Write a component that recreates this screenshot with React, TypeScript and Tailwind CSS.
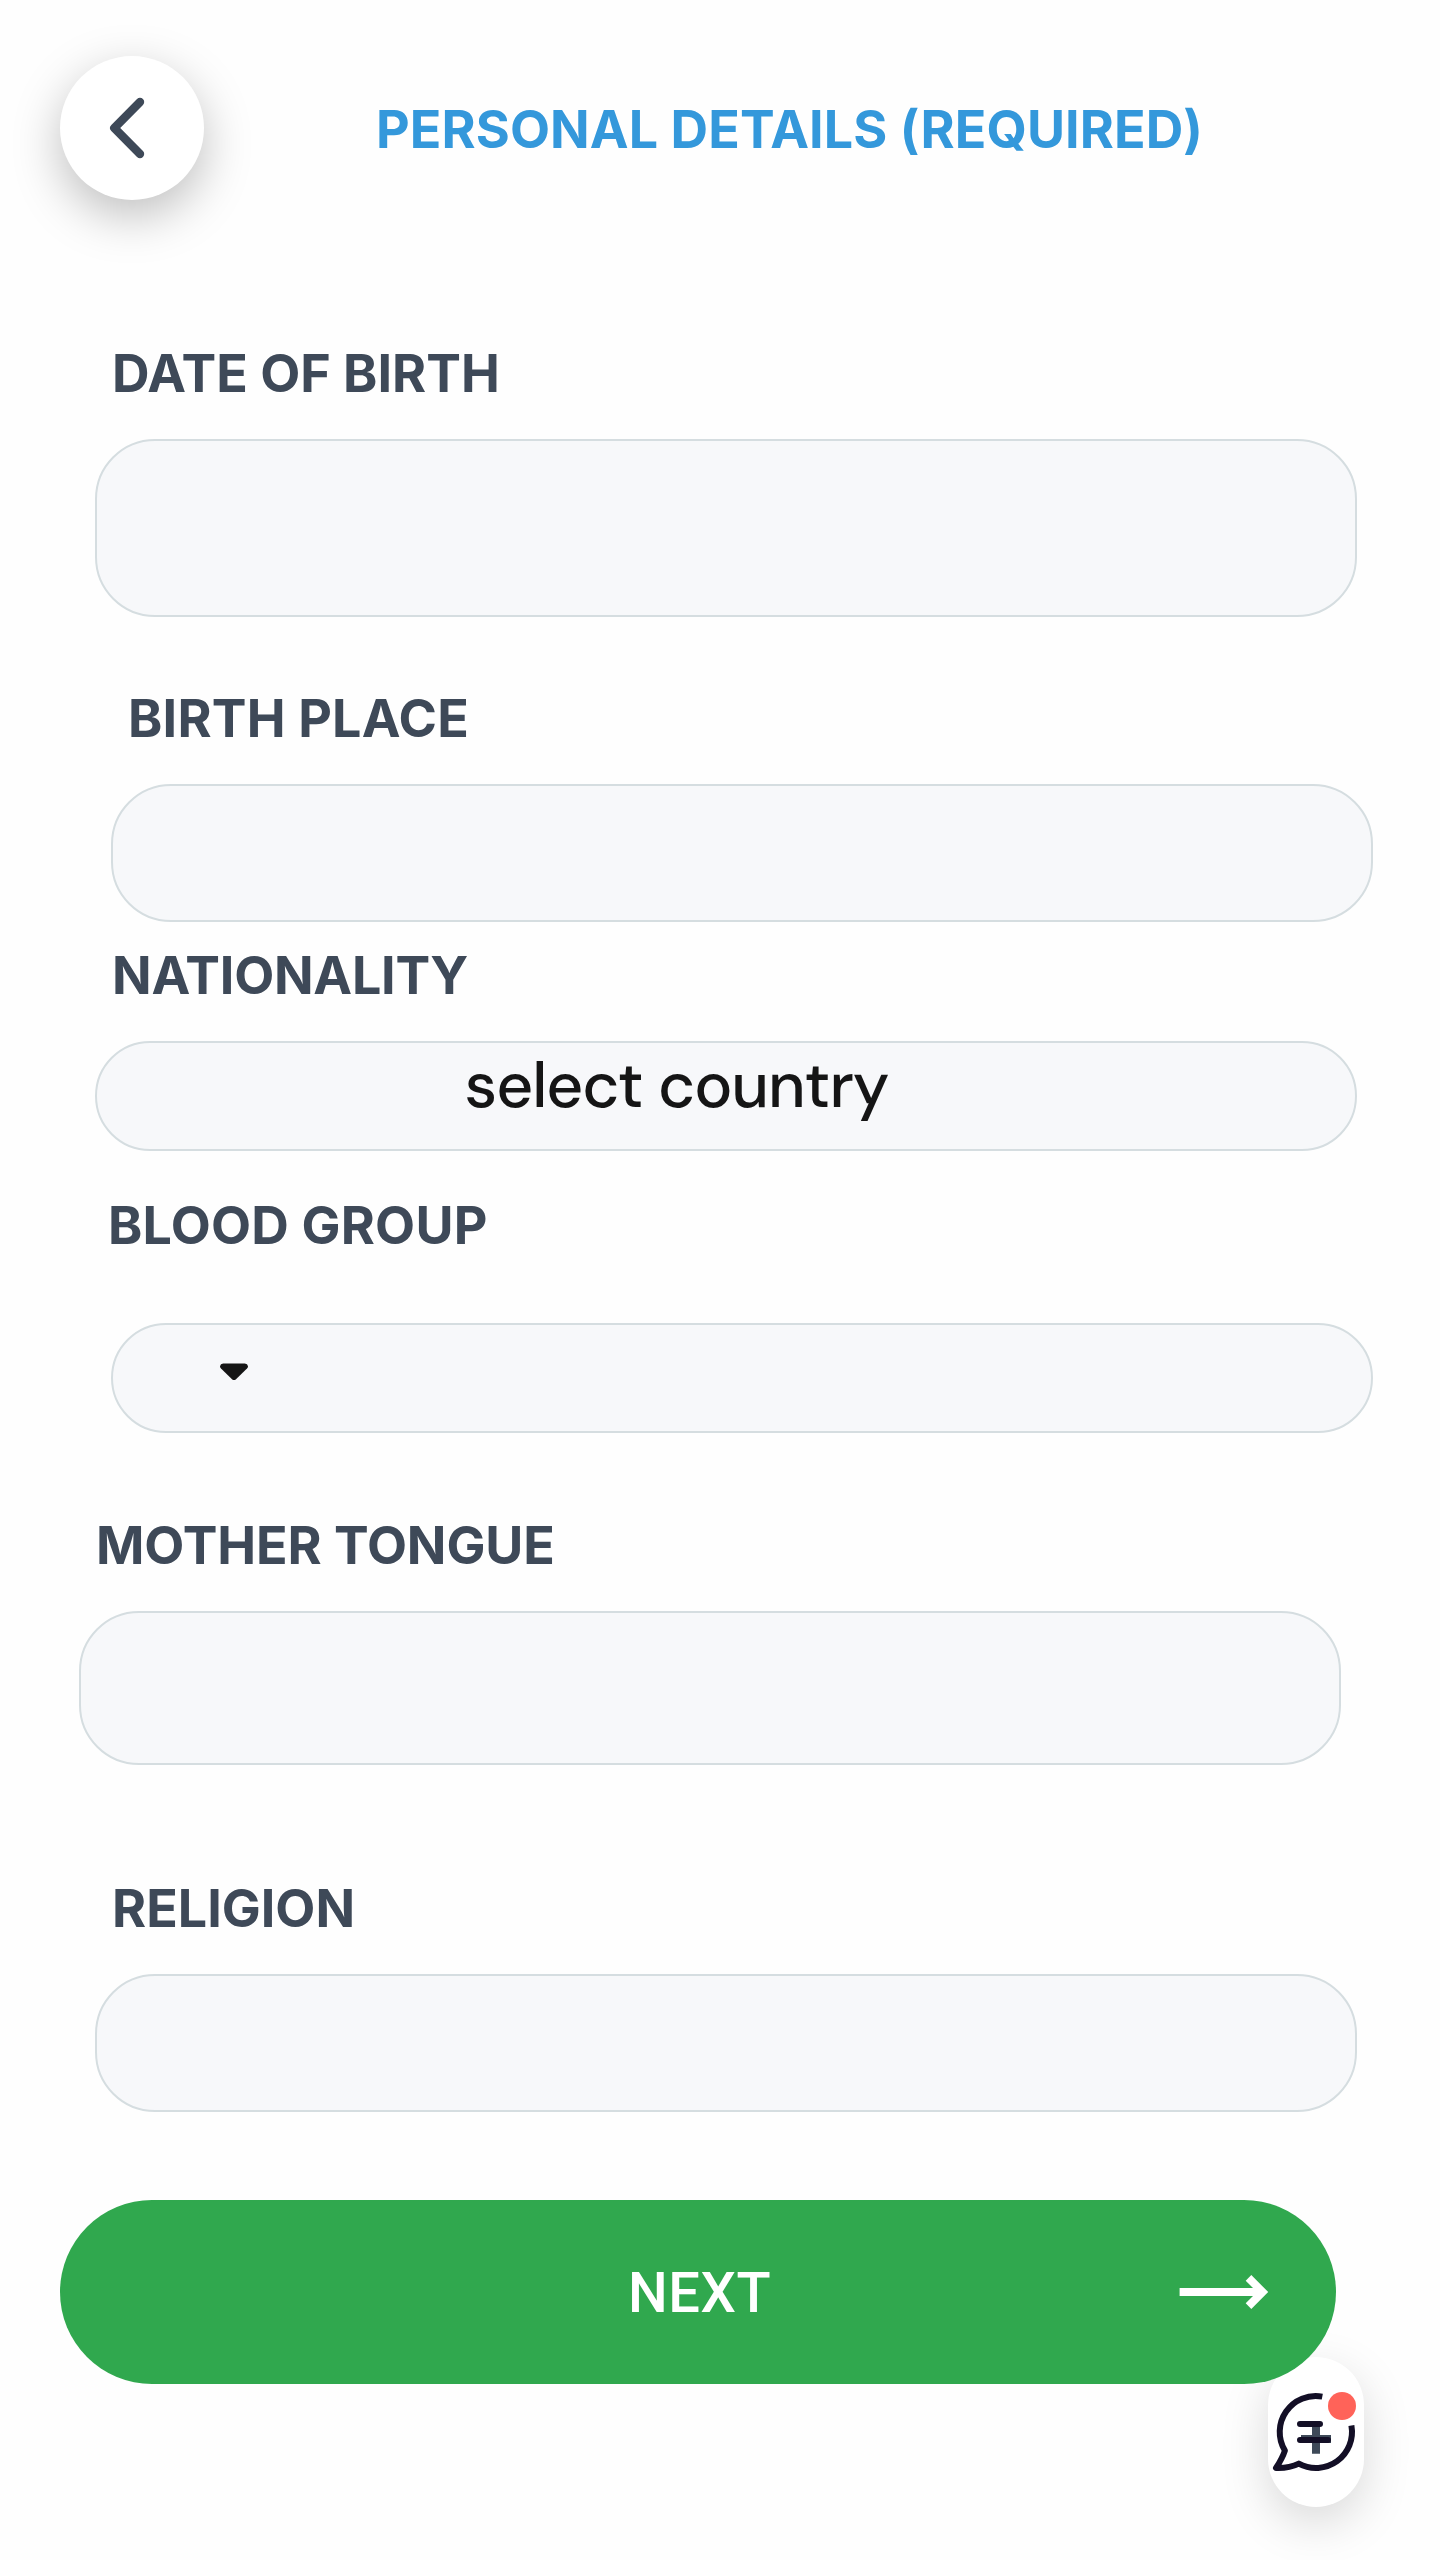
import type { ReactNode } from "react";

type FieldProps = {
  label: string;
  className: string;
  labelClass?: string;
  boxClass: string;
  children?: ReactNode;
};

function Field({ label, className, labelClass = "ml-[17px] mb-[39px]", boxClass, children }: FieldProps) {
  return (
    <div className={`flex w-[1262px] flex-col ${className}`}>
      <label className={`text-[52px] leading-[52px] font-bold whitespace-nowrap text-[#3e4958] ${labelClass}`}>
        {label}
      </label>
      <div className={`w-full rounded-[60px] border-2 border-[#d5dde0] bg-[#f7f8fa] ${boxClass}`}>{children}</div>
    </div>
  );
}

function BackIcon() {
  return (
    <svg
      className="mr-3 h-16 w-10"
      viewBox="0 0 40 64"
      fill="none"
      stroke="#3e4958"
      strokeWidth="8.4"
      strokeLinecap="round"
      strokeLinejoin="round"
    >
      <path d="M34 6 L8.3 32 L34 58" />
    </svg>
  );
}

function ArrowIcon() {
  return (
    <svg className="h-9 w-[90px]" viewBox="0 0 90 36" fill="#fff">
      <path d="M0.600 14H74L66.700 6.700L72.300 1.100L89.200 18L72.300 34.900L66.700 29.300L74 22H0.600Z" />
    </svg>
  );
}

function ChatIcon() {
  return (
    <svg className="h-24 w-24" viewBox="68 84 96 96" fill="none">
      <path d="M101 135h11v-11h8v11h11v8h-11v10.700h-8V143h-11z" fill="#3e4958" />
      <g stroke="#130f26" strokeWidth="6" strokeLinejoin="round">
        <path d="M122.300 96.600A36 36 0 0 0 84.900 150.600Q82.500 158 76 168Q89 168.500 98.800 163.600A36 36 0 0 0 151.400 125.500" />
        <path d="M100 124h20M100 140h28" strokeLinecap="round" />
      </g>
      <circle cx="142" cy="106" r="14" fill="#ff6359" />
    </svg>
  );
}

export default function App() {
  return (
    <main className="relative flex h-[2560px] w-[1440px] flex-col items-start overflow-hidden bg-[#fefefe] font-['Inter',sans-serif]">
      <header className="mt-14 ml-[60px] flex h-36 items-center">
        <button
          aria-label="Back"
          className="flex size-36 items-center justify-center rounded-full bg-white shadow-[0_16px_48px_rgba(0,0,0,0.25)]"
        >
          <BackIcon />
        </button>
        <h1 className="mt-1 ml-[172px] text-[52px] leading-[52px] font-bold tracking-[0.1px] whitespace-nowrap text-[#3498db]">
          PERSONAL DETAILS (REQUIRED)
        </h1>
      </header>

      <Field label="DATE OF BIRTH" className="mt-[148px] ml-[95px]" boxClass="h-[178px]" />
      <Field
        label="BIRTH PLACE"
        className="mt-[76px] ml-[111px]"
        labelClass="ml-[17px] mb-[39px] tracking-[0.2px]"
        boxClass="h-[138px]"
      />
      <Field
        label="NATIONALITY"
        className="mt-7 ml-[95px]"
        labelClass="ml-[17px] mb-[39px] tracking-[-0.25px]"
        boxClass="h-[110px]"
      >
        <span className="ml-[367.5px] block pt-[11px] font-['DM_Sans',Inter,sans-serif] text-[64px] leading-[64px] font-medium tracking-[-1.05px] text-[#151515]">
          select country
        </span>
      </Field>
      <Field
        label="BLOOD GROUP"
        className="mt-[49px] ml-[111px]"
        labelClass="-ml-[3px] mb-[71px] tracking-[0.2px]"
        boxClass="h-[110px]"
      >
        <svg className="mt-[38px] ml-[107px] h-[18px] w-7" viewBox="0 0 28 18" fill="#151515">
          <path d="M3.200 0.500H24.800Q27.600 0.700 28 3.200Q28 4.500 27 5.600L16 16.200Q14 18 12 16.200L1 5.600Q0 4.500 0 3.200Q0.400 0.700 3.200 0.500Z" />
        </svg>
      </Field>
      <Field
        label="MOTHER TONGUE"
        className="mt-[87px] ml-[79px]"
        labelClass="ml-[17px] mb-[39px] tracking-[-0.08px]"
        boxClass="h-[154px]"
      />
      <Field label="RELIGION" className="mt-[118px] ml-[95px]" boxClass="h-[138px]" />

      <button className="relative z-10 mt-[88px] ml-[60px] flex h-[184px] w-[1276px] items-center rounded-full bg-[#30a84e] text-white">
        <span className="mt-0.5 ml-[568px] font-['Roboto',sans-serif] text-[56px] leading-[56px] font-medium tracking-[0.6px]">
          NEXT
        </span>
        <span className="mr-[67px] ml-auto">
          <ArrowIcon />
        </span>
      </button>

      <button
        aria-label="Chat"
        className="absolute top-[2357px] left-[1268px] flex h-[150px] w-24 items-center justify-center rounded-[48px] bg-white shadow-[0_16px_48px_rgba(0,0,0,0.15)]"
      >
        <ChatIcon />
      </button>
    </main>
  );
}
